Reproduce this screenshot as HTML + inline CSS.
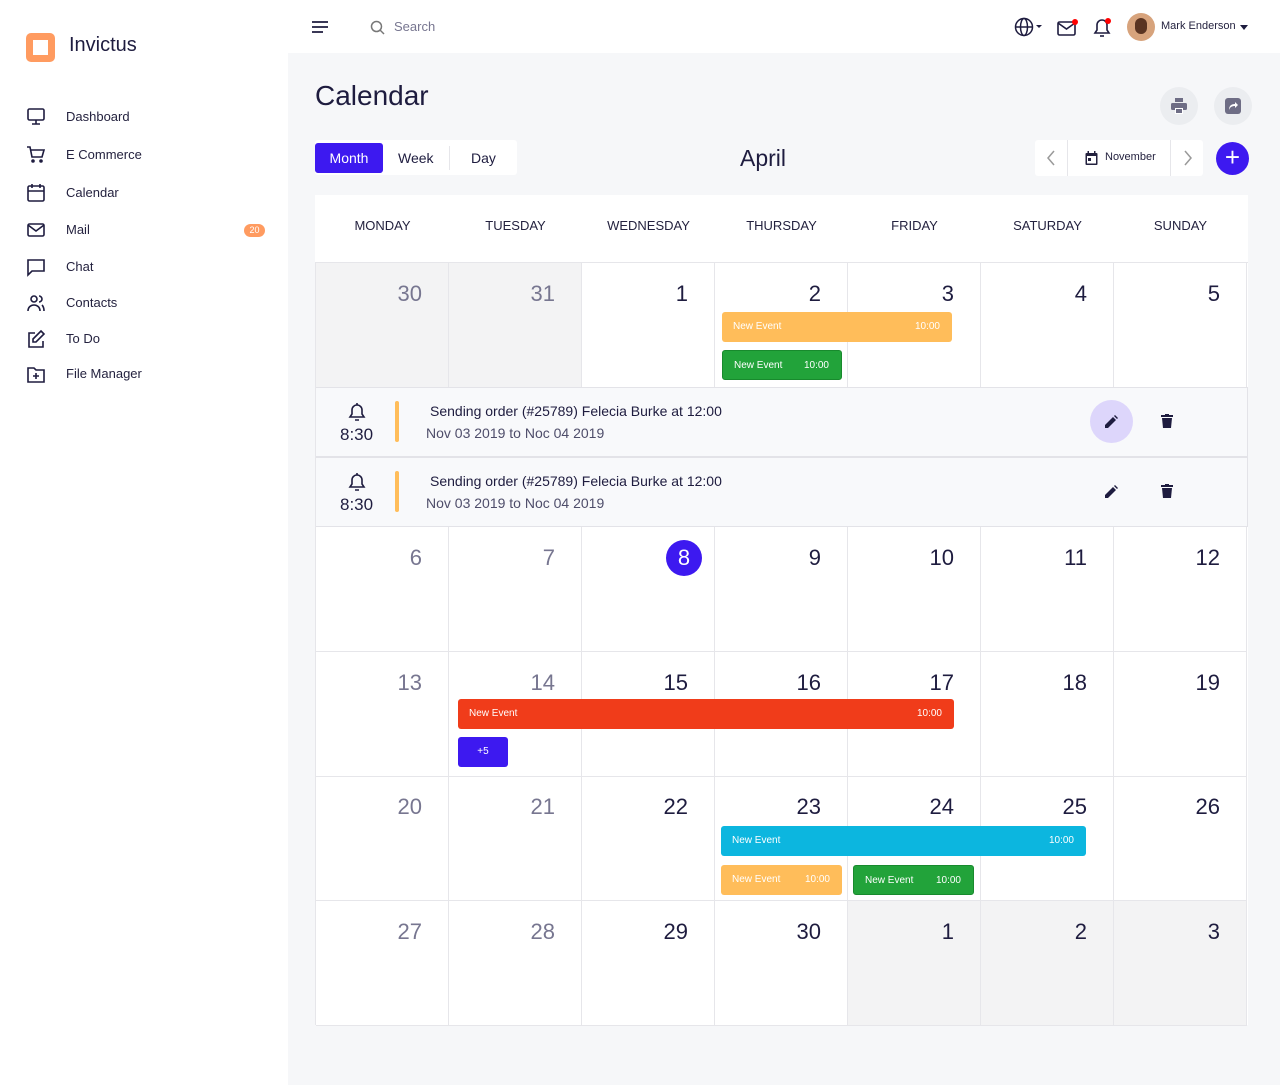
<!DOCTYPE html>
<html><head><meta charset="utf-8"><style>
*{box-sizing:border-box;margin:0;padding:0}
body{width:1280px;height:1085px;position:relative;font-family:"Liberation Sans",sans-serif;background:#f6f7f9;color:#1e1c3f;overflow:hidden}
.a{position:absolute}
.side{left:0;top:0;width:288px;height:1085px;background:#fff}
.nav{left:26px;font-size:13px;color:#24223f}
.nav svg{position:absolute;left:0;top:-2px}
.nav span{position:absolute;left:40px;top:0;white-space:nowrap}
.top{left:288px;top:0;width:992px;height:53px;background:#fff}
.cal{left:315px;top:195px;width:933px;height:830px;background:#fff}
.hd{top:218px;font-size:13px;color:#24223f;width:133px;text-align:center}
.cell{border-right:1px solid #e6e6ea;border-bottom:1px solid #e6e6ea;width:133px;height:125px}
.gray{background:#f3f3f4}
.num{font-size:22px;position:absolute;right:26px;top:18px;color:#1e1c3f}
.mut{color:#777690}
.ev{position:absolute;height:30px;border-radius:3px;font-size:10px;color:#fff;line-height:30px;padding:0 11px}
.ev b{font-weight:normal;position:absolute;right:12px}
.det{left:315px;width:933px;height:70px;background:#f8f9fb;border:1px solid #e3e3e8}
</style></head><body>
<div class="a side"></div>
<div class="a" style="left:26px;top:33px;width:29px;height:29px;border-radius:5px;background:#ff9b60"><div class="a" style="left:7px;top:7px;width:15px;height:15px;background:#fff"></div></div>
<div class="a" style="left:69px;top:34px;font-size:20px;color:#1e1c3f">Invictus</div>

<div class="a nav" style="top:109px"><svg width="20" height="20" viewBox="0 0 20 20" fill="none" stroke="#1e1c3f" stroke-width="1.6"><rect x="2" y="2" width="16" height="11" rx="1.5"/><path d="M6 17h8M10 13v4"/></svg><span>Dashboard</span></div>
<div class="a nav" style="top:147px"><svg width="20" height="20" viewBox="0 0 20 20" fill="none" stroke="#1e1c3f" stroke-width="1.6"><path d="M1 2h3l2 10h10l2-7H5"/><circle cx="7" cy="16" r="1" fill="#1e1c3f"/><circle cx="15" cy="16" r="1" fill="#1e1c3f"/></svg><span>E Commerce</span></div>
<div class="a nav" style="top:185px"><svg width="20" height="20" viewBox="0 0 20 20" fill="none" stroke="#1e1c3f" stroke-width="1.6"><rect x="2" y="3" width="16" height="15" rx="1.5"/><path d="M2 8h16M6 1v4M14 1v4"/></svg><span>Calendar</span></div>
<div class="a nav" style="top:222px"><svg width="20" height="20" viewBox="0 0 20 20" fill="none" stroke="#1e1c3f" stroke-width="1.6"><rect x="2" y="4" width="16" height="12" rx="1.5"/><path d="M2 5l8 6 8-6"/></svg><span>Mail</span></div>
<div class="a" style="left:244px;top:224px;width:21px;height:13px;border-radius:7px;background:#ff9b60;color:#fff;font-size:9px;text-align:center;line-height:13px">20</div>
<div class="a nav" style="top:259px"><svg width="20" height="20" viewBox="0 0 20 20" fill="none" stroke="#1e1c3f" stroke-width="1.6"><path d="M2 3h16v11H6l-4 4z"/></svg><span>Chat</span></div>
<div class="a nav" style="top:295px"><svg width="20" height="20" viewBox="0 0 20 20" fill="none" stroke="#1e1c3f" stroke-width="1.6"><circle cx="8" cy="6" r="3"/><path d="M2 18c0-4 3-6 6-6s6 2 6 6M13 3a3 3 0 010 6M16 12c1 1 2 3 2 6"/></svg><span>Contacts</span></div>
<div class="a nav" style="top:331px"><svg width="20" height="20" viewBox="0 0 20 20" fill="none" stroke="#1e1c3f" stroke-width="1.6"><path d="M9 4H3v14h14v-6M15 2l3 3-8 8H7v-3z"/></svg><span>To Do</span></div>
<div class="a nav" style="top:366px"><svg width="20" height="20" viewBox="0 0 20 20" fill="none" stroke="#1e1c3f" stroke-width="1.6"><path d="M2 4h6l2 2h8v12H2z"/><path d="M10 9v6M7 12h6"/></svg><span>File Manager</span></div>

<div class="a top"></div>
<svg class="a" style="left:311px;top:20px" width="18" height="14" viewBox="0 0 18 14" stroke="#1e1c3f" stroke-width="1.8"><path d="M1 2h16M1 7h16M1 12h11"/></svg>
<svg class="a" style="left:370px;top:20px" width="15" height="15" viewBox="0 0 15 15" fill="none" stroke="#777" stroke-width="1.5"><circle cx="6.5" cy="6.5" r="5"/><path d="M10 10l4 4"/></svg>
<div class="a" style="left:394px;top:19px;font-size:13px;color:#777690">Search</div>
<svg class="a" style="left:1014px;top:17px" width="30" height="20" viewBox="0 0 30 20" fill="none" stroke="#1e1c3f" stroke-width="1.5"><circle cx="10" cy="10" r="8.5"/><ellipse cx="10" cy="10" rx="3.5" ry="8.5"/><path d="M1.5 10h17"/><path d="M22 8h6l-3 3z" fill="#1e1c3f" stroke="none"/></svg>
<svg class="a" style="left:1057px;top:18px" width="22" height="20" viewBox="0 0 22 20" fill="none" stroke="#1e1c3f" stroke-width="1.6"><rect x="1" y="4" width="17" height="13" rx="1.5"/><path d="M1 5l8.5 6 8.5-6"/><circle cx="18" cy="4" r="3" fill="#f00" stroke="none"/></svg>
<svg class="a" style="left:1092px;top:17px" width="22" height="22" viewBox="0 0 22 22" fill="none" stroke="#1e1c3f" stroke-width="1.6"><path d="M3 16h14l-2-3V8a5 5 0 00-10 0v5z"/><path d="M8 19h4"/><circle cx="16" cy="4" r="3" fill="#f00" stroke="none"/></svg>
<div class="a" style="left:1127px;top:13px;width:28px;height:28px;border-radius:50%;background:#d7a37c;overflow:hidden"><div class="a" style="left:8px;top:5px;width:12px;height:16px;border-radius:6px;background:#5a3422"></div></div>
<div class="a" style="left:1161px;top:20px;font-size:11px;color:#24223f">Mark Enderson</div>
<div class="a" style="left:1240px;top:25px;border:4px solid transparent;border-top:5px solid #1e1c3f"></div>

<div class="a" style="left:315px;top:80px;font-size:28px;color:#1e1c3f">Calendar</div>
<div class="a" style="left:1160px;top:87px;width:38px;height:38px;border-radius:50%;background:#ebedf0"></div>
<svg class="a" style="left:1170px;top:97px" width="18" height="18" viewBox="0 0 18 18" fill="#6e6d85"><rect x="5" y="1" width="8" height="4"/><rect x="1" y="6" width="16" height="7" rx="1.5"/><rect x="5" y="11" width="8" height="6" fill="#fff"/><rect x="6" y="12" width="6" height="4"/></svg>
<div class="a" style="left:1214px;top:87px;width:38px;height:38px;border-radius:50%;background:#ebedf0"></div>
<svg class="a" style="left:1224px;top:97px" width="18" height="18" viewBox="0 0 18 18"><rect x="1" y="1" width="16" height="16" rx="3" fill="#6e6d85"/><path d="M5 13c0-4 2-6 6-6V5l3 3-3 3V9c-3 0-5 1-6 4z" fill="#fff"/></svg>

<div class="a" style="left:315px;top:140px;width:202px;height:35px;background:#fff;border-radius:3px"></div>
<div class="a" style="left:315px;top:143px;width:68px;height:30px;background:#3d19f0;border-radius:3px;color:#fff;font-size:14px;text-align:center;line-height:30px">Month</div>
<div class="a" style="left:398px;top:150px;font-size:14px">Week</div>
<div class="a" style="left:449px;top:146px;width:1px;height:24px;background:#e6e6ea"></div>
<div class="a" style="left:471px;top:150px;font-size:14px">Day</div>
<div class="a" style="left:740px;top:145px;font-size:23px">April</div>
<div class="a" style="left:1035px;top:140px;width:168px;height:36px;background:#fff;border-radius:3px"></div>
<div class="a" style="left:1067px;top:140px;width:1px;height:36px;background:#e6e6ea"></div>
<div class="a" style="left:1170px;top:140px;width:1px;height:36px;background:#e6e6ea"></div>
<svg class="a" style="left:1045px;top:150px" width="12" height="16" viewBox="0 0 12 16" fill="none" stroke="#999" stroke-width="1.5"><path d="M9 1L3 8l6 7"/></svg>
<svg class="a" style="left:1182px;top:150px" width="12" height="16" viewBox="0 0 12 16" fill="none" stroke="#999" stroke-width="1.5"><path d="M3 1l6 7-6 7"/></svg>
<svg class="a" style="left:1085px;top:151px" width="13" height="14" viewBox="0 0 13 14"><rect x="0.5" y="2" width="12" height="12" rx="1" fill="#24223f"/><rect x="2" y="5" width="9" height="7.5" fill="#fff"/><rect x="3" y="7" width="3" height="3" fill="#24223f"/><rect x="2.5" y="0" width="1.5" height="3" fill="#24223f"/><rect x="9" y="0" width="1.5" height="3" fill="#24223f"/></svg>
<div class="a" style="left:1105px;top:151px;font-size:11px;color:#24223f">November</div>
<div class="a" style="left:1216px;top:142px;width:33px;height:33px;border-radius:50%;background:#3d19f0;color:#fff;font-size:26px;text-align:center;line-height:31px">+</div>

<div class="a cal"></div>
<div class="a hd" style="left:316px">MONDAY</div>
<div class="a hd" style="left:449px">TUESDAY</div>
<div class="a hd" style="left:582px">WEDNESDAY</div>
<div class="a hd" style="left:715px">THURSDAY</div>
<div class="a hd" style="left:848px">FRIDAY</div>
<div class="a hd" style="left:981px">SATURDAY</div>
<div class="a hd" style="left:1114px">SUNDAY</div>
<div class="a" style="left:315px;top:262px;width:933px;height:1px;background:#e6e6ea"></div>

<!-- row 1 -->
<div class="a cell gray" style="left:316px;top:263px"><div class="num mut">30</div></div>
<div class="a cell gray" style="left:449px;top:263px"><div class="num mut">31</div></div>
<div class="a cell" style="left:582px;top:263px"><div class="num">1</div></div>
<div class="a cell" style="left:715px;top:263px"><div class="num">2</div></div>
<div class="a cell" style="left:848px;top:263px"><div class="num">3</div></div>
<div class="a cell" style="left:981px;top:263px"><div class="num">4</div></div>
<div class="a cell" style="left:1114px;top:263px"><div class="num">5</div></div>
<div class="ev" style="left:722px;top:312px;width:230px;background:#ffbd5a">New Event<b>10:00</b></div>
<div class="ev" style="left:722px;top:350px;width:120px;background:#22a33a;border:1px solid #188a2d">New Event<b>10:00</b></div>

<div class="a det" style="top:387px"></div>
<div class="a det" style="top:457px"></div>
<svg class="a" style="left:347px;top:402px" width="20" height="20" viewBox="0 0 20 20" fill="none" stroke="#1e1c3f" stroke-width="1.6"><path d="M3 15h14l-2-3V8a5 5 0 00-10 0v4z"/><path d="M8 18h4M10 1v2"/></svg>
<div class="a" style="left:340px;top:425px;font-size:17px">8:30</div>
<div class="a" style="left:395px;top:401px;width:4px;height:41px;background:#ffbd5a;border-radius:2px"></div>
<div class="a" style="left:430px;top:403px;font-size:14px">Sending order (#25789) Felecia Burke at 12:00</div>
<div class="a" style="left:426px;top:425px;font-size:14px;color:#4e4d6a">Nov 03 2019 to Noc 04 2019</div>
<div class="a" style="left:1090px;top:400px;width:43px;height:43px;border-radius:50%;background:#ddd6fb"></div>
<svg class="a" style="left:1105px;top:415px" width="13" height="13" viewBox="0 0 13 13" fill="#1e1c3f"><path d="M0 10l8-8 3 3-8 8H0zM9 1l1-1 3 3-1 1z"/></svg>
<svg class="a" style="left:1161px;top:414px" width="12" height="14" viewBox="0 0 12 14" fill="#1e1c3f"><rect x="0" y="1" width="12" height="2"/><rect x="4" y="0" width="4" height="2"/><path d="M1 4h10l-1 10H2z"/></svg>

<svg class="a" style="left:347px;top:472px" width="20" height="20" viewBox="0 0 20 20" fill="none" stroke="#1e1c3f" stroke-width="1.6"><path d="M3 15h14l-2-3V8a5 5 0 00-10 0v4z"/><path d="M8 18h4M10 1v2"/></svg>
<div class="a" style="left:340px;top:495px;font-size:17px">8:30</div>
<div class="a" style="left:395px;top:471px;width:4px;height:41px;background:#ffbd5a;border-radius:2px"></div>
<div class="a" style="left:430px;top:473px;font-size:14px">Sending order (#25789) Felecia Burke at 12:00</div>
<div class="a" style="left:426px;top:495px;font-size:14px;color:#4e4d6a">Nov 03 2019 to Noc 04 2019</div>
<svg class="a" style="left:1105px;top:485px" width="13" height="13" viewBox="0 0 13 13" fill="#1e1c3f"><path d="M0 10l8-8 3 3-8 8H0zM9 1l1-1 3 3-1 1z"/></svg>
<svg class="a" style="left:1161px;top:484px" width="12" height="14" viewBox="0 0 12 14" fill="#1e1c3f"><rect x="0" y="1" width="12" height="2"/><rect x="4" y="0" width="4" height="2"/><path d="M1 4h10l-1 10H2z"/></svg>

<!-- row 2 -->
<div class="a cell" style="left:316px;top:527px"><div class="num mut">6</div></div>
<div class="a cell" style="left:449px;top:527px"><div class="num mut">7</div></div>
<div class="a cell" style="left:582px;top:527px"><div class="a" style="left:84px;top:13px;width:36px;height:36px;border-radius:50%;background:#3d19f0;color:#fff;font-size:22px;text-align:center;line-height:36px">8</div></div>
<div class="a cell" style="left:715px;top:527px"><div class="num">9</div></div>
<div class="a cell" style="left:848px;top:527px"><div class="num">10</div></div>
<div class="a cell" style="left:981px;top:527px"><div class="num">11</div></div>
<div class="a cell" style="left:1114px;top:527px"><div class="num">12</div></div>
<!-- row 3 -->
<div class="a cell" style="left:316px;top:652px"><div class="num mut">13</div></div>
<div class="a cell" style="left:449px;top:652px"><div class="num mut">14</div></div>
<div class="a cell" style="left:582px;top:652px"><div class="num">15</div></div>
<div class="a cell" style="left:715px;top:652px"><div class="num">16</div></div>
<div class="a cell" style="left:848px;top:652px"><div class="num">17</div></div>
<div class="a cell" style="left:981px;top:652px"><div class="num">18</div></div>
<div class="a cell" style="left:1114px;top:652px"><div class="num">19</div></div>
<div class="ev" style="left:458px;top:699px;width:496px;background:#f03c1a">New Event<b>10:00</b></div>
<div class="ev" style="left:458px;top:737px;width:50px;background:#3d19f0;text-align:center">+5</div>
<!-- row 4 -->
<div class="a cell" style="left:316px;top:776px"><div class="num mut">20</div></div>
<div class="a cell" style="left:449px;top:776px"><div class="num mut">21</div></div>
<div class="a cell" style="left:582px;top:776px"><div class="num">22</div></div>
<div class="a cell" style="left:715px;top:776px"><div class="num">23</div></div>
<div class="a cell" style="left:848px;top:776px"><div class="num">24</div></div>
<div class="a cell" style="left:981px;top:776px"><div class="num">25</div></div>
<div class="a cell" style="left:1114px;top:776px"><div class="num">26</div></div>
<div class="ev" style="left:721px;top:826px;width:365px;background:#0cb6df">New Event<b>10:00</b></div>
<div class="ev" style="left:721px;top:865px;width:121px;background:#ffbd5a">New Event<b>10:00</b></div>
<div class="ev" style="left:853px;top:865px;width:121px;background:#22a33a;border:1px solid #188a2d">New Event<b>10:00</b></div>
<!-- row 5 -->
<div class="a cell" style="left:316px;top:901px"><div class="num mut">27</div></div>
<div class="a cell" style="left:449px;top:901px"><div class="num mut">28</div></div>
<div class="a cell" style="left:582px;top:901px"><div class="num">29</div></div>
<div class="a cell" style="left:715px;top:901px"><div class="num">30</div></div>
<div class="a cell gray" style="left:848px;top:901px"><div class="num">1</div></div>
<div class="a cell gray" style="left:981px;top:901px"><div class="num">2</div></div>
<div class="a cell gray" style="left:1114px;top:901px"><div class="num">3</div></div>
<div class="a" style="left:315px;top:263px;width:1px;height:762px;background:#e6e6ea"></div>
</body></html>
